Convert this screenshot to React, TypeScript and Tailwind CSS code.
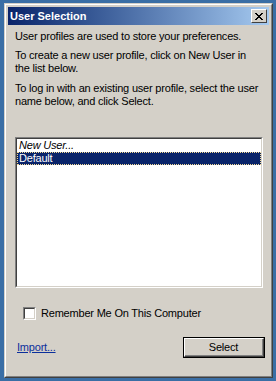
import React, { useState } from 'react';

export default function App() {
  const [selected, setSelected] = useState(1);
  const [remember, setRemember] = useState(false);
  const users = ['New User...', 'Default'];

  return (
    <div className="w-[276px] h-[381px] bg-[#3a6ea5] pl-[4px] pt-[3px] overflow-hidden font-['Liberation_Sans',Arial,sans-serif]">
      {/* window frame */}
      <div className="w-[269px] h-[375px] border border-t-[#d4d0c8] border-l-[#d4d0c8] border-r-[#404040] border-b-[#404040]">
        <div className="h-full border border-t-white border-l-white border-r-[#808080] border-b-[#808080] bg-[#d4d0c8] p-[2px] flex flex-col">
          {/* title bar */}
          <div className="h-[18px] shrink-0 bg-linear-to-r from-[#0a246a] to-[#a6caf0] flex items-center justify-between pl-[2px] pr-[2px]">
            <span className="text-white font-bold text-[11px] leading-none">User Selection</span>
            <button className="w-[16px] h-[14px] bg-[#d4d0c8] border border-t-white border-l-white border-r-[#404040] border-b-[#404040] flex items-center justify-center">
              <svg width="8" height="7" viewBox="0 0 8 7" shapeRendering="crispEdges">
                <path d="M0 0h2v1h-2zM6 0h2v1h-2zM1 1h2v1h-2zM5 1h2v1h-2zM2 2h4v1h-4zM3 3h2v1h-2zM2 4h4v1h-4zM1 5h2v1h-2zM5 5h2v1h-2zM0 6h2v1h-2zM6 6h2v1h-2z" fill="#000" />
              </svg>
            </button>
          </div>

          {/* client area */}
          <div className="flex-1 flex flex-col pt-[5px] text-[11px] leading-[13px] tracking-[-0.2px] text-black whitespace-nowrap">
            <p className="pl-[7px]">User profiles are used to store your preferences.</p>
            <p className="pl-[7px] mt-[6px]">
              To create a new user profile, click on New User in
              <br />
              the list below.
            </p>
            <p className="pl-[7px] mt-[7px]">
              To log in with an existing user profile, select the user
              <br />
              name below, and click Select.
            </p>

            {/* list box */}
            <div className="ml-[7px] mt-[29px] w-[248px] h-[151px] border border-t-[#808080] border-l-[#808080] border-r-white border-b-white">
              <div className="h-full bg-white border border-t-[#404040] border-l-[#404040] border-r-[#d4d0c8] border-b-[#d4d0c8]">
                {users.map((u, i) => (
                  <div
                    key={u}
                    onClick={() => setSelected(i)}
                    className={
                      i === selected
                        ? 'h-[13px] pl-[1px] bg-[#0a246a] text-white border border-dotted border-[#f5db95] leading-[11px]'
                        : 'h-[13px] pl-[2px] leading-[13px] ' + (i === 0 ? 'italic' : '')
                    }
                  >
                    {u}
                  </div>
                ))}
              </div>
            </div>

            {/* remember checkbox */}
            <label className="ml-[15px] mt-[19px] flex items-center gap-[5px] cursor-default">
              <span
                onClick={() => setRemember(!remember)}
                className="w-[13px] h-[13px] border border-t-[#808080] border-l-[#808080] border-r-white border-b-white"
              >
                <span className="block w-full h-full bg-white border border-t-[#404040] border-l-[#404040] border-r-[#d4d0c8] border-b-[#d4d0c8]">
                  {remember && (
                    <svg width="9" height="9" viewBox="0 0 9 9">
                      <path d="M1 4l2 2 5-5" stroke="#000" strokeWidth="1.5" fill="none" />
                    </svg>
                  )}
                </span>
              </span>
              <span>Remember Me On This Computer</span>
            </label>

            {/* footer */}
            <div className="mt-[17px] pl-[9px] pr-[4px] flex items-center justify-between">
              <a className="text-[#0b2f9c] underline leading-[13px]">Import...</a>
              <button className="w-[82px] h-[21px] border border-black">
                <span className="block h-full border border-t-white border-l-white border-r-[#404040] border-b-[#404040]">
                  <span className="flex items-center justify-center h-full border-r border-b border-r-[#808080] border-b-[#808080]">
                    Select
                  </span>
                </span>
              </button>
            </div>
          </div>
        </div>
      </div>
    </div>
  );
}
